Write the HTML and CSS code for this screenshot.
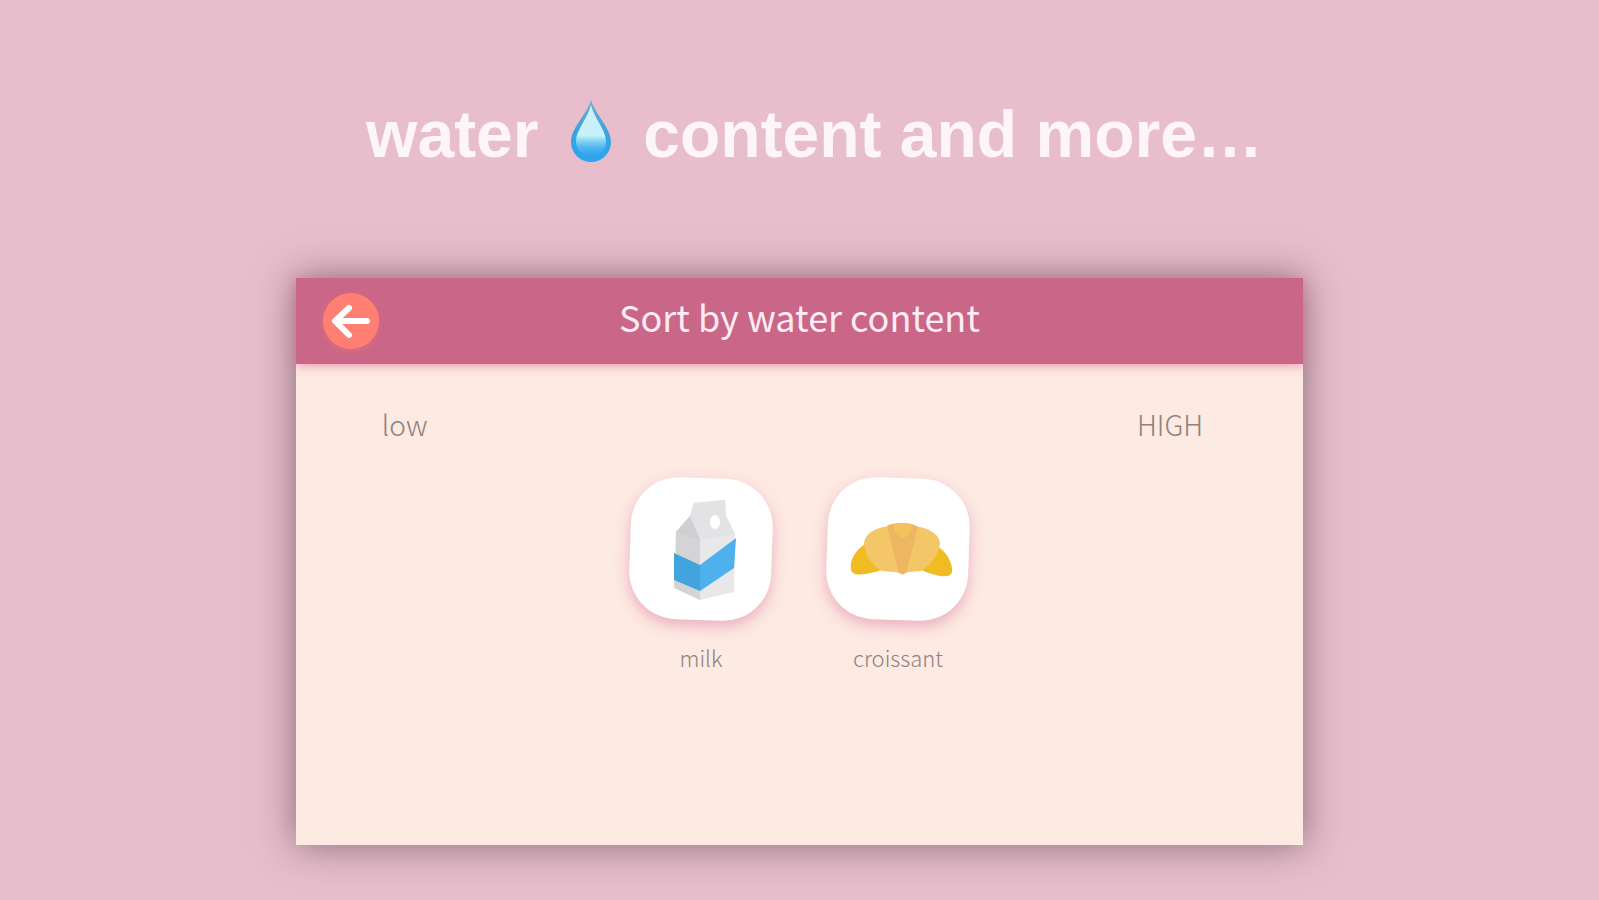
FILE: index.html
```
<!DOCTYPE html>
<html lang="en">
    <head>
        <meta charset="utf-8">
        <title>Sort by water content</title>
        <link rel="stylesheet" href="styles.css">
    </head>
    <body>
        <h1>
            water
            <svg class="drop" viewBox="0 0 40 64" role="img" aria-label="drop">
                <defs>
                    <linearGradient id="rim" x1="0" y1="0" x2="0" y2="1">
                        <stop offset="0" stop-color="#6fb0d0"/>
                        <stop offset="0.5" stop-color="#3ba3dc"/>
                        <stop offset="1" stop-color="#2ba6f2"/>
                    </linearGradient>
                    <linearGradient id="shine" x1="0" y1="0" x2="0" y2="1">
                        <stop offset="0" stop-color="#d4edf5"/>
                        <stop offset="0.6" stop-color="#c4f2fb"/>
                        <stop offset="1" stop-color="#4cbcf6" stop-opacity="0"/>
                    </linearGradient>
                </defs>
                <path d="M20 1C16 15 0 29 0 43a20 20 0 0 0 40 0C40 29 24 15 20 1z" fill="url(#rim)"/>
                <path d="M20 6C17 19 5 31 5 42c0 9 6 15 15 15s15-6 15-15C35 31 23 19 20 6z" fill="url(#shine)"/>
            </svg>
            content and more…
        </h1>
        <main class="card">
            <header class="bar">
                <button class="back" type="button" aria-label="Back">
                    <svg viewBox="0 0 56 56">
                        <path d="M44 28H13M26 15L12 28l14 14" fill="none" stroke="#fff" stroke-width="6" stroke-linecap="round" stroke-linejoin="round"/>
                    </svg>
                </button>
                <h2>Sort by water content</h2>
            </header>
            <div class="scale">
                <span>low</span>
                <span>HIGH</span>
            </div>
            <div class="foods">
                <figure>
                    <button class="tile" type="button" aria-label="milk">
                        <svg viewBox="0 0 142 142">
                            <path d="M60 38L46 54L44 110L70 122V60z" fill="#d4d4d6"/>
                            <path d="M60 38L64 25L95 22L96 38L105 56L104 114L70 122V60z" fill="#e8e8ea"/>
                            <path d="M60 38L64 25L95 22L96 38L105 56L70 62z" fill="#e3e3e5"/>
                            <path d="M60 38L46 54L70 62z" fill="#cfcfd1"/>
                            <path d="M44 75L70 87V113L44 102z" fill="#43a4dd"/>
                            <path d="M70 87L106 60L104 90L70 113z" fill="#4eb0ec"/>
                            <ellipse cx="85" cy="44" rx="5" ry="7" fill="#fff"/>
                        </svg>
                    </button>
                    <figcaption>milk</figcaption>
                </figure>
                <figure>
                    <button class="tile" type="button" aria-label="croissant">
                        <svg viewBox="0 0 142 142">
                            <path d="M38 66C29 72 22 82 24 92c2 8 18 4 38-2z" fill="#f1bb22"/>
                            <path d="M110 68c9 5 16 17 15 26c-2 8-18 4-38-5z" fill="#f1bb22"/>
                            <path d="M64 48C49 49 38 55 37 65c1 13 8 23 18 28l25 2z" fill="#f3c768"/>
                            <path d="M86 48c14 1 27 8 27 18c-2 12-10 21-19 27l-24 2z" fill="#f3c768"/>
                            <path d="M60 48c6-4 25-4 31 1L80 92c-2 6-7 6-9 0z" fill="#efb661"/>
                            <path d="M67 46c4-1 13-1 17 0c1 5 0 8-3 11l-5 4l-6-5c-3-3-4-6-3-10z" fill="#f3c25c"/>
                        </svg>
                    </button>
                    <figcaption>croissant</figcaption>
                </figure>
            </div>
        </main>
    </body>
</html>
```
FILE: styles.css
```
body {
    margin: 0;
    min-height: 100vh;
    box-sizing: border-box;
    padding-top: 94px;
    background-color: #e8bdcc;
    font-family: "Noto Sans CJK SC", sans-serif;
}
h1 {
    margin: 0 0 104px;
    padding-left: 30px;
    font-family: "Liberation Sans", sans-serif;
    font-size: 66px;
    line-height: 80px;
    text-align: center;
    color: #fdf5f9;
}
.drop {
    width: 40px;
    height: 64px;
    margin: 0 14px;
    vertical-align: -6px;
}
.card {
    width: 63%;
    aspect-ratio: 16 / 9;
    margin: 0 auto;
    background-color: #fdeae2;
    box-shadow: 0 0 36px rgba(50, 40, 45, 0.55);
}
.bar {
    display: grid;
    grid-template-columns: 56px 1fr 56px;
    align-items: center;
    height: 86px;
    padding: 0 27px;
    background-color: #ca6687;
    box-shadow: 0 2px 10px rgba(220, 100, 150, 0.6);
}
.bar h2 {
    margin: 0;
    padding-bottom: 10px;
    font-size: 36px;
    font-weight: 400;
    line-height: 72px;
    text-align: center;
    color: #fdecf3;
}
.back {
    width: 56px;
    height: 56px;
    padding: 0;
    border: none;
    border-radius: 50%;
    background-color: #ff8072;
    box-shadow: 0 2px 6px rgba(255, 128, 114, 0.4);
    cursor: pointer;
}
.back svg, .tile svg {
    display: block;
    width: 100%;
}
.scale {
    display: flex;
    justify-content: space-between;
    padding: 42px 100px 0 86px;
    font-size: 28px;
    font-weight: 300;
    line-height: 36px;
    color: #8f827d;
}
.foods {
    display: flex;
    justify-content: center;
    gap: 55px;
    padding-top: 36px;
}
figure {
    width: 142px;
    margin: 0;
}
.tile {
    display: block;
    width: 142px;
    height: 142px;
    padding: 0;
    border: none;
    border-radius: 48px;
    background-color: #fff;
    box-shadow: 0 6px 14px rgba(220, 120, 160, 0.5);
    transform: rotate(2deg);
    cursor: pointer;
}
.tile svg {
    transform: rotate(-2deg);
}
figcaption {
    margin-top: 22px;
    font-size: 22px;
    font-weight: 300;
    line-height: 30px;
    text-align: center;
    white-space: nowrap;
    color: #8f827d;
}
```
